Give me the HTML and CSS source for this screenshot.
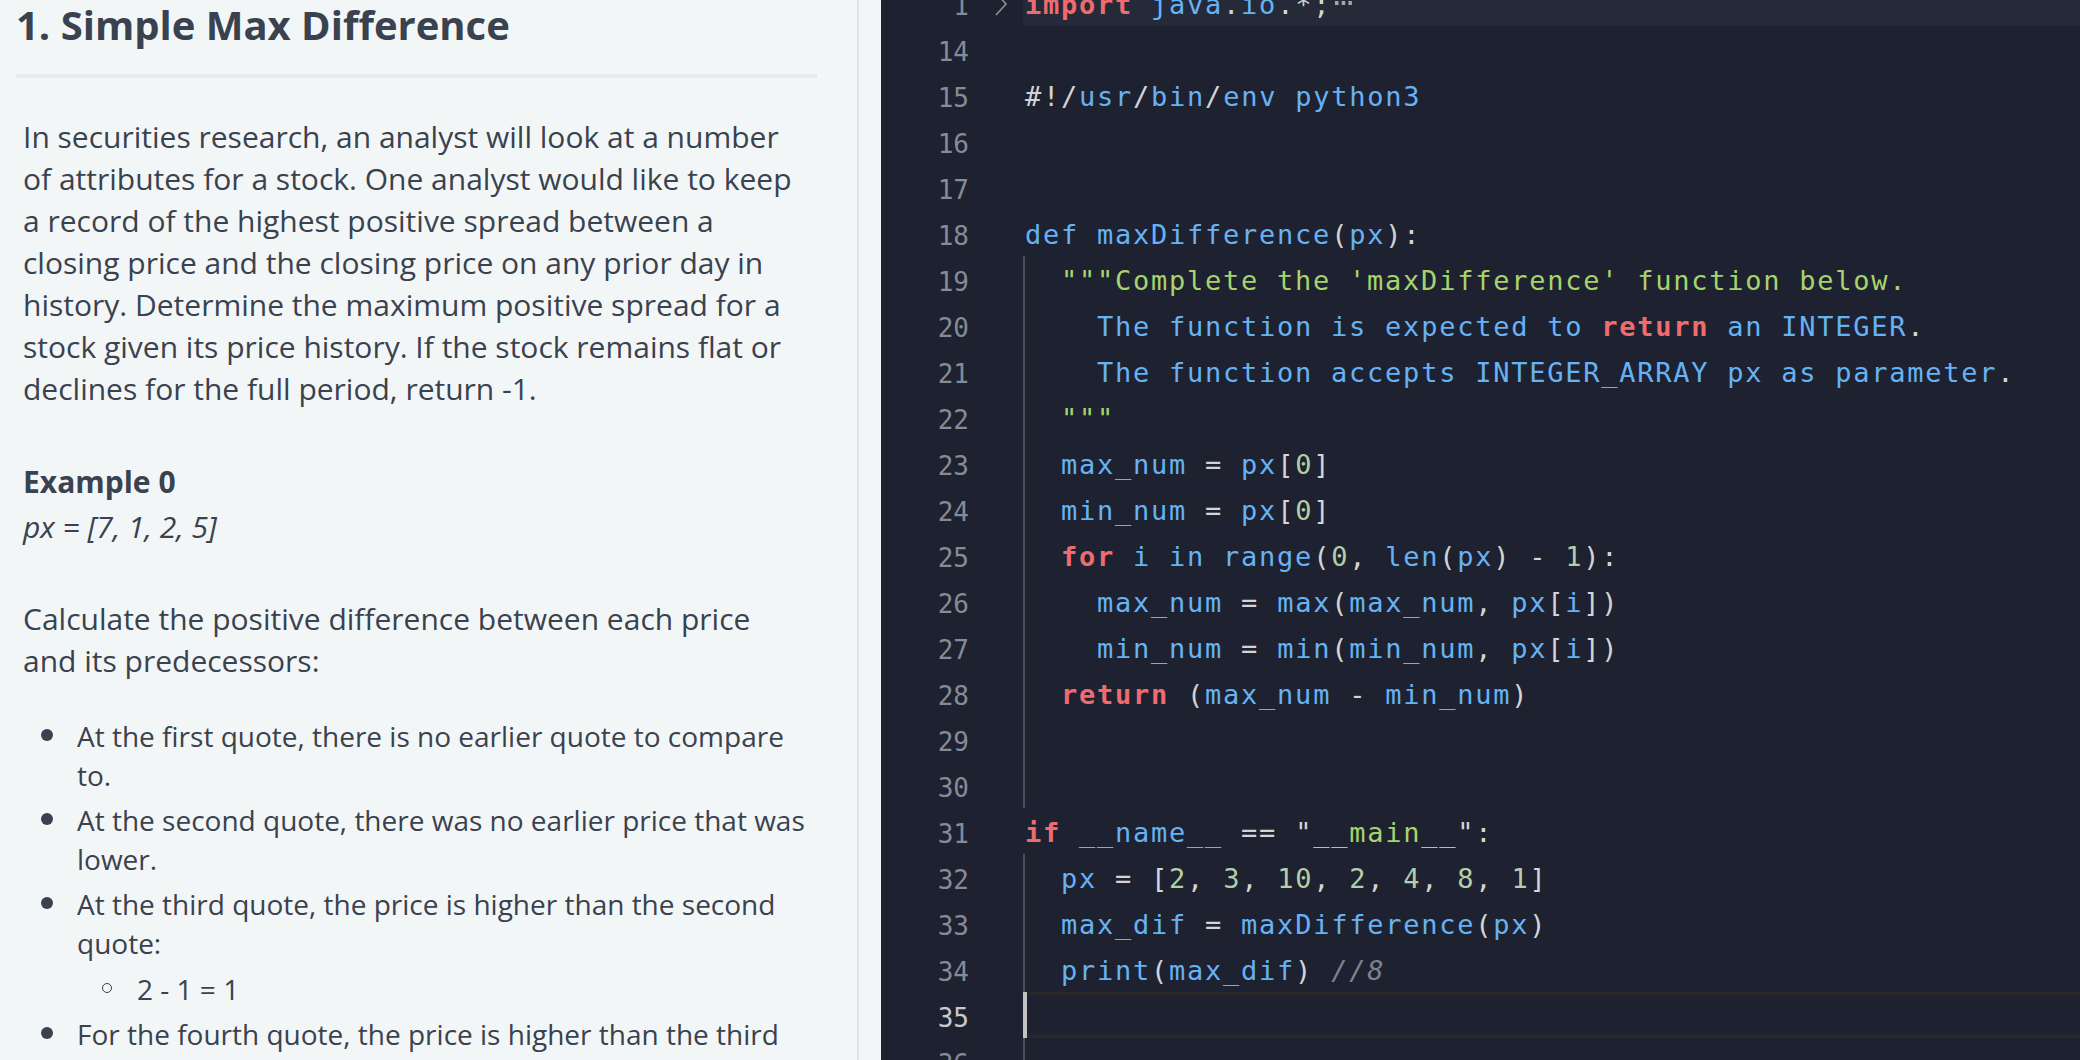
FILE: index.html
```html
<!DOCTYPE html>
<html>
<head>
<meta charset="utf-8">
<link rel="stylesheet" href="styles.css">
</head>
<body>
<div class="left">
  <div class="desc">
    <h1 class="title">1. Simple Max Difference</h1>
    <div class="body">
      <p class="para">In securities research, an analyst will look at a number of attributes for a stock. One analyst would like to keep a record of the highest positive spread between a closing price and the closing price on any prior day in history. Determine the maximum positive spread for a stock given its price history. If the stock remains flat or declines for the full period, return -1.</p>
      <div class="example">
        <div class="ex-title">Example 0</div>
        <div class="ex-val">px = [7, 1, 2, 5]</div>
      </div>
      <p class="para2">Calculate the positive difference between each price and its predecessors:</p>
      <ul class="list">
        <li class="item">At the first quote, there is no earlier quote to compare to.</li>
        <li class="item">At the second quote, there was no earlier price that was lower.</li>
        <li class="item">At the third quote, the price is higher than the second quote:
          <ul class="sub"><li class="subitem">2 - 1 = 1</li></ul>
        </li>
        <li class="item">For the fourth quote, the price is higher than the third and the second quotes:</li>
      </ul>
    </div>
  </div>
</div>
<div class="editor">
  <div class="lines">
    <div class="row fl"><span class="ln">1</span><span class="fold"><svg class="chev" width="14" height="26" viewBox="0 0 14 26"><polyline points="2,2 12,13 2,24" fill="none" stroke="#8b909a" stroke-width="1.6"/></svg></span><span class="code"><span class="kw">import</span> <span class="id">java</span><span class="pu">.</span><span class="id">io</span><span class="pu">.*;</span><svg class="more" width="17" height="4" viewBox="0 0 17 4"><rect x="0" y="0" width="3.5" height="4" fill="#a2a6ad"/><rect x="6.7" y="0" width="3.5" height="4" fill="#a2a6ad"/><rect x="13.4" y="0" width="3.5" height="4" fill="#a2a6ad"/></svg></span></div>
    <div class="row"><span class="ln">14</span><span class="fold"></span><span class="code"></span></div>
    <div class="row"><span class="ln">15</span><span class="fold"></span><span class="code"><span class="pu">#!/</span><span class="id">usr</span><span class="pu">/</span><span class="id">bin</span><span class="pu">/</span><span class="id">env</span> <span class="id">python3</span></span></div>
    <div class="row"><span class="ln">16</span><span class="fold"></span><span class="code"></span></div>
    <div class="row"><span class="ln">17</span><span class="fold"></span><span class="code"></span></div>
    <div class="row"><span class="ln">18</span><span class="fold"></span><span class="code"><span class="id">def</span> <span class="id">maxDifference</span><span class="pu">(</span><span class="id">px</span><span class="pu">):</span></span></div>
    <div class="row"><span class="ln">19</span><span class="fold"></span><span class="code g">  <span class="st">"""Complete the 'maxDifference' function below.</span></span></div>
    <div class="row"><span class="ln">20</span><span class="fold"></span><span class="code g">    <span class="id">The function is expected to</span> <span class="kw">return</span> <span class="id">an INTEGER</span><span class="pu">.</span></span></div>
    <div class="row"><span class="ln">21</span><span class="fold"></span><span class="code g">    <span class="id">The function accepts INTEGER_ARRAY px as parameter</span><span class="pu">.</span></span></div>
    <div class="row"><span class="ln">22</span><span class="fold"></span><span class="code g">  <span class="st">"""</span></span></div>
    <div class="row"><span class="ln">23</span><span class="fold"></span><span class="code g">  <span class="id">max_num</span> <span class="pu">=</span> <span class="id">px</span><span class="pu">[</span><span class="nu">0</span><span class="pu">]</span></span></div>
    <div class="row"><span class="ln">24</span><span class="fold"></span><span class="code g">  <span class="id">min_num</span> <span class="pu">=</span> <span class="id">px</span><span class="pu">[</span><span class="nu">0</span><span class="pu">]</span></span></div>
    <div class="row"><span class="ln">25</span><span class="fold"></span><span class="code g">  <span class="kw">for</span> <span class="id">i in range</span><span class="pu">(</span><span class="nu">0</span><span class="pu">,</span> <span class="id">len</span><span class="pu">(</span><span class="id">px</span><span class="pu">) -</span> <span class="nu">1</span><span class="pu">):</span></span></div>
    <div class="row"><span class="ln">26</span><span class="fold"></span><span class="code g">    <span class="id">max_num</span> <span class="pu">=</span> <span class="id">max</span><span class="pu">(</span><span class="id">max_num</span><span class="pu">,</span> <span class="id">px</span><span class="pu">[</span><span class="id">i</span><span class="pu">])</span></span></div>
    <div class="row"><span class="ln">27</span><span class="fold"></span><span class="code g">    <span class="id">min_num</span> <span class="pu">=</span> <span class="id">min</span><span class="pu">(</span><span class="id">min_num</span><span class="pu">,</span> <span class="id">px</span><span class="pu">[</span><span class="id">i</span><span class="pu">])</span></span></div>
    <div class="row"><span class="ln">28</span><span class="fold"></span><span class="code g">  <span class="kw">return</span> <span class="pu">(</span><span class="id">max_num</span> <span class="pu">-</span> <span class="id">min_num</span><span class="pu">)</span></span></div>
    <div class="row"><span class="ln">29</span><span class="fold"></span><span class="code g"></span></div>
    <div class="row"><span class="ln">30</span><span class="fold"></span><span class="code g"></span></div>
    <div class="row"><span class="ln">31</span><span class="fold"></span><span class="code"><span class="kw">if</span> <span class="id">__name__</span> <span class="pu">==</span> <span class="pu">"</span><span class="st">__main__</span><span class="pu">":</span></span></div>
    <div class="row"><span class="ln">32</span><span class="fold"></span><span class="code g">  <span class="id">px</span> <span class="pu">=</span> <span class="pu">[</span><span class="nu">2</span><span class="pu">,</span> <span class="nu">3</span><span class="pu">,</span> <span class="nu">10</span><span class="pu">,</span> <span class="nu">2</span><span class="pu">,</span> <span class="nu">4</span><span class="pu">,</span> <span class="nu">8</span><span class="pu">,</span> <span class="nu">1</span><span class="pu">]</span></span></div>
    <div class="row"><span class="ln">33</span><span class="fold"></span><span class="code g">  <span class="id">max_dif</span> <span class="pu">=</span> <span class="id">maxDifference</span><span class="pu">(</span><span class="id">px</span><span class="pu">)</span></span></div>
    <div class="row"><span class="ln">34</span><span class="fold"></span><span class="code g">  <span class="id">print</span><span class="pu">(</span><span class="id">max_dif</span><span class="pu">)</span> <span class="cm">//8</span></span></div>
    <div class="row act"><span class="ln">35</span><span class="fold"></span><span class="code"></span></div>
    <div class="row"><span class="ln">36</span><span class="fold"></span><span class="code g"></span></div>
  </div>
</div>
</body>
</html>
```
FILE: styles.css
```css
html, body {
  margin: 0;
  padding: 0;
}

body {
  width: 2080px;
  height: 1060px;
  overflow: hidden;
  display: flex;
  gap: 22px;
  background: #f3f6f7;
  font-family: "Open Sans", sans-serif;
  color: #39424e;
}

.left {
  flex: none;
  width: 857px;
  border-right: 2px solid #dfe4e7;
  overflow: hidden;
}

.desc {
  padding: 0 40px 0 16px;
}

.title {
  margin: 0;
  font-size: 40px;
  font-weight: 700;
  line-height: 50px;
  padding-bottom: 24px;
  border-bottom: 4px solid #e7ebed;
}

.body {
  padding: 0 11px 0 7px;
  font-size: 30px;
}

.para {
  margin: 38px 0 0;
  line-height: 42px;
}

.example {
  margin-top: 49px;
  line-height: 45px;
}

.ex-title {
  font-weight: 700;
}

.ex-val {
  font-style: italic;
}

.para2 {
  margin: 49px 0 0;
  line-height: 42px;
}

.list {
  list-style: none;
  margin: 35px 0 0;
  padding: 0 0 0 54px;
  font-size: 28px;
  line-height: 39px;
}

.item {
  position: relative;
  margin-top: 6px;
}

.item::before {
  content: "";
  position: absolute;
  left: -36px;
  top: 12px;
  width: 12px;
  height: 12px;
  border-radius: 50%;
  background: #39424e;
}

.sub {
  list-style: none;
  margin: 0;
  padding: 0 0 0 60px;
}

.subitem {
  position: relative;
  margin-top: 6.5px;
}

.subitem::before {
  content: "";
  position: absolute;
  left: -35px;
  top: 13px;
  width: 8px;
  height: 8px;
  border-radius: 50%;
  border: 1.7px solid #39424e;
}

.editor {
  flex: 1;
  background: #1e2230;
  overflow: hidden;
}

.lines {
  margin-top: -20px;
}

.row {
  display: flex;
  height: 46px;
  font-family: "DejaVu Sans Mono", monospace;
}

.ln {
  flex: none;
  width: 88px;
  box-sizing: border-box;
  padding-top: 3px;
  text-align: right;
  font-size: 26px;
  line-height: 46px;
  color: #858b97;
}

.act .ln {
  color: #c8cacd;
}

.fold {
  flex: none;
  width: 54px;
  position: relative;
}

.chev {
  position: absolute;
  left: 25px;
  top: 11px;
}

.code {
  flex: 1;
  box-sizing: border-box;
  height: 46px;
  padding-top: 2px;
  white-space: pre;
  font-size: 27px;
  line-height: 46px;
  letter-spacing: 1.75px;
  border-left: 2px solid transparent;
  color: #66b2f4;
}

.code.g {
  border-left-color: #4a4e59;
}

.fl .code {
  background: #252a39;
}

.act .code {
  border-left: 4px solid #c2c2c2;
  box-shadow: inset 0 3px #282828, inset 0 -3px #282828;
}

.kw {
  color: #f06b70;
  font-weight: 700;
}

.id {
  color: #66b2f4;
}

.st {
  color: #a6d46c;
}

.nu {
  color: #b5cea8;
}

.pu {
  color: #d4d4d4;
}

.cm {
  color: #7c8390;
  font-style: italic;
}

.more {
  margin-left: 4px;
  vertical-align: 9px;
}
```
